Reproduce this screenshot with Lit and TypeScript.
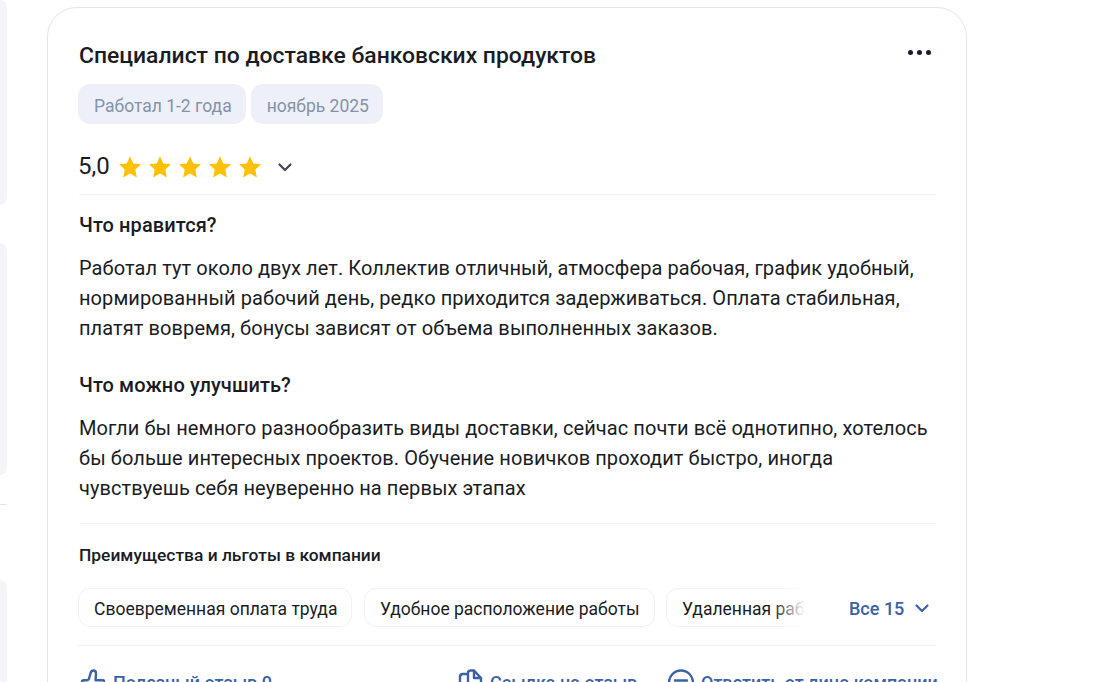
import { LitElement, html, css } from 'lit';
import { customElement } from 'lit/decorators.js';

const star = html`<svg class="star" viewBox="0 0 24 24"><path d="M12 1.2l3.3 7.2 7.7.9-5.7 5.3 1.5 7.8L12 18.5l-6.8 3.9 1.5-7.8L1 9.3l7.7-.9z"/></svg>`;

@customElement('app-root')
export class AppRoot extends LitElement {
  static styles = css`
    :host {
      display: flex;
      width: 1105px;
      height: 682px;
      overflow: hidden;
      background: #fff;
      font-family: Roboto, 'Noto Sans', sans-serif;
      color: #1a1c24;
    }

    .rail {
      width: 7px;
      flex: none;
      display: flex;
      flex-direction: column;
    }

    .rail-block {
      background: #f4f5fb;
      border-radius: 0 12px 12px 0;
      flex: none;
    }

    .rail-first { height: 205px; margin-bottom: 38px; }
    .rail-second { height: 232px; margin-bottom: 29px; }
    .rail-line { height: 1px; background: #e6e8f2; margin-bottom: 75px; flex: none; }
    .rail-third { height: 200px; }

    .card {
      box-sizing: border-box;
      flex: none;
      width: 920px;
      height: 760px;
      margin: 7px 0 0 40px;
      padding: 32px 30px 0 31px;
      border: 1px solid #e2e5f0;
      border-radius: 30px;
    }

    .head {
      display: flex;
      justify-content: space-between;
      height: 30px;
    }

    h2 {
      margin: 0;
      font-size: 22.9px;
      font-weight: 500;
      line-height: 32px;
    }

    .more {
      display: flex;
      gap: 4px;
      margin: 10px 5px 0 0;
    }

    .more i {
      width: 5px;
      height: 5px;
      border-radius: 50%;
      background: #1a1c2e;
    }

    .tags {
      display: flex;
      gap: 5px;
      margin: 14px 0 0 -1px;
    }

    .tag {
      height: 40px;
      line-height: 44px;
      padding: 0 14px 0 16px;
      border-radius: 12px;
      background: #edf0f8;
      color: #8592a8;
      font-size: 17.5px;
    }

    .rating {
      display: flex;
      align-items: center;
      height: 36px;
      margin-top: 24px;
      padding-bottom: 10px;
      border-bottom: 1px solid #f1f2f8;
    }

    .score {
      font-size: 24px;
      line-height: 36px;
      width: 40px;
      margin-left: -1px;
    }

    .star {
      width: 24px;
      height: 24px;
      margin: 2px 6px 0 0;
      fill: #ffc107;
      flex: none;
    }

    .rating .chev {
      margin: 2px 0 0 8px;
      stroke: #444650;
    }

    .chev {
      width: 18px;
      height: 18px;
      fill: none;
      stroke-width: 2.2;
      stroke-linecap: round;
      stroke-linejoin: round;
      flex: none;
    }

    h3 {
      margin: 0;
      font-size: 20px;
      letter-spacing: 0.1px;
      font-weight: 500;
      line-height: 30px;
    }

    .first-q { margin-top: 15px; }
    .second-q { margin-top: 27px; }

    p {
      margin: 13px 0 0;
      font-size: 20px;
      letter-spacing: 0.08px;
      line-height: 30px;
      width: 857px;
    }

    .perks {
      margin-top: 20px;
      border-top: 1px solid #f1f2f8;
      padding-top: 20px;
    }

    .perks h4 {
      margin: 0;
      font-size: 17.4px;
      font-weight: 500;
      line-height: 23px;
    }

    .perk-row {
      display: flex;
      align-items: center;
      margin: 21px 0 0 -1px;
      padding-bottom: 18px;
      border-bottom: 1px solid #f1f2f8;
    }

    .chips {
      position: relative;
      display: flex;
      gap: 11.5px;
      width: 727px;
      overflow: hidden;
      flex: none;
    }

    .chips::after {
      content: '';
      position: absolute;
      top: 0;
      right: 0;
      bottom: 0;
      width: 32px;
      background: linear-gradient(to right, rgba(255, 255, 255, 0), #fff);
    }

    .chip {
      box-sizing: border-box;
      height: 39px;
      line-height: 40px;
      padding: 0 14px 0 15px;
      border: 1px solid #eff1f8;
      border-radius: 12px;
      font-size: 17.5px;
      white-space: nowrap;
      flex: none;
    }

    .all {
      display: flex;
      align-items: center;
      gap: 9px;
      margin-left: 44px;
      padding-top: 1px;
      color: #3a62a5;
      font-size: 18px;
      font-weight: 500;
    }

    .all .chev { stroke: #3a62a5; }

    .actions {
      display: flex;
      margin-top: 21px;
      font-size: 18px;
      font-weight: 500;
      color: #3a62a5;
      white-space: nowrap;
    }

    .action {
      display: flex;
      align-items: center;
      gap: 7px;
      height: 30px;
      flex: none;
    }

    .action svg {
      width: 26px;
      height: 26px;
      fill: none;
      stroke: #3a62a5;
      stroke-width: 2.4;
      stroke-linejoin: round;
      stroke-linecap: round;
      flex: none;
    }

    .helpful { width: 379px; gap: 8px; }
    .link { width: 210px; gap: 6px; }
  `;

  render() {
    return html`
      <div class="rail">
        <div class="rail-block rail-first"></div>
        <div class="rail-block rail-second"></div>
        <div class="rail-line"></div>
        <div class="rail-block rail-third"></div>
      </div>
      <div class="card">
        <div class="head">
          <h2>Специалист по доставке банковских продуктов</h2>
          <div class="more"><i></i><i></i><i></i></div>
        </div>
        <div class="tags">
          <span class="tag">Работал 1-2 года</span>
          <span class="tag">ноябрь 2025</span>
        </div>
        <div class="rating">
          <span class="score">5,0</span>
          ${star}${star}${star}${star}${star}
          <svg class="chev" viewBox="0 0 18 18"><path d="M3.500 6.500L9 12l5.500-5.500"/></svg>
        </div>
        <h3 class="first-q">Что нравится?</h3>
        <p>Работал тут около двух лет. Коллектив отличный, атмосфера рабочая, график удобный, нормированный рабочий день, редко приходится задерживаться. Оплата стабильная, платят вовремя, бонусы зависят от объема выполненных заказов.</p>
        <h3 class="second-q">Что можно улучшить?</h3>
        <p>Могли бы немного разнообразить виды доставки, сейчас почти всё однотипно, хотелось бы больше интересных проектов. Обучение новичков проходит быстро, иногда чувствуешь себя неуверенно на первых этапах</p>
        <div class="perks">
          <h4>Преимущества и льготы в компании</h4>
          <div class="perk-row">
            <div class="chips">
              <span class="chip">Своевременная оплата труда</span>
              <span class="chip">Удобное расположение работы</span>
              <span class="chip">Удаленная работа</span>
            </div>
            <div class="all">
              Все 15
              <svg class="chev" viewBox="0 0 18 18"><path d="M3.500 6.500L9 12l5.500-5.500"/></svg>
            </div>
          </div>
        </div>
        <div class="actions">
          <div class="action helpful">
            <svg viewBox="0 0 26 26"><path d="M3 25V13c0-1 .6-1.800 1.800-1.800H8c1 0 1.600-.5 2-1.400l1.500-5.500C12 2.500 13 1.500 14.500 1.500s2.500 1.200 2.500 3l-.5 6.700H24c1 0 1.500 1 1.200 2L23 25"/></svg>
            Полезный отзыв 0
          </div>
          <div class="action link">
            <svg viewBox="0 0 26 26"><path d="M2 25V8c0-1.800 1-3 3-3h5M10 14V4.500C10 2.500 11 1.500 13 1.500h3l7 7.500v7M16 1.500V9h7"/></svg>
            Ссылка на отзыв
          </div>
          <div class="action">
            <svg viewBox="0 0 26 26"><circle cx="13" cy="13.500" r="12"/><path d="M7 11.500h12M7 16.500h12"/></svg>
            Ответить от лица компании
          </div>
        </div>
      </div>
    `;
  }
}

declare global {
  interface HTMLElementTagNameMap {
    'app-root': AppRoot;
  }
}
